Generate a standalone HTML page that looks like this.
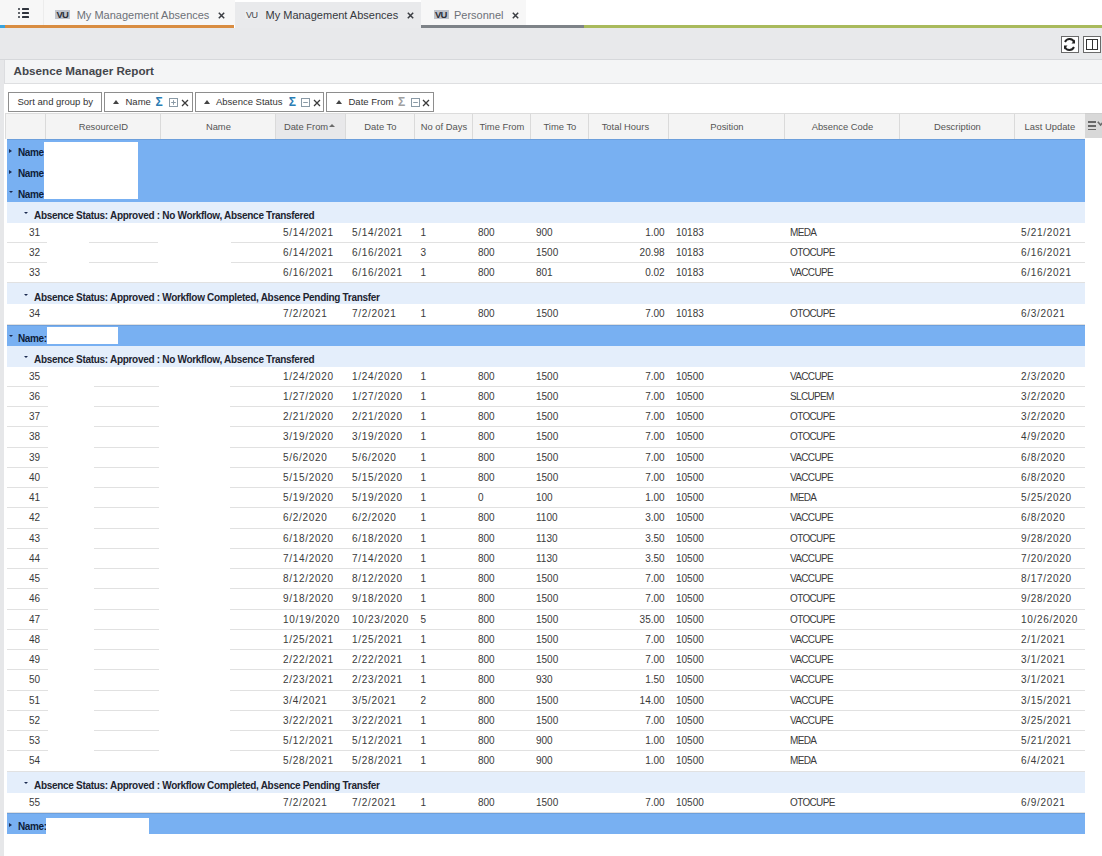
<!DOCTYPE html>
<html><head><meta charset="utf-8">
<style>
*{box-sizing:border-box;margin:0;padding:0}
html,body{width:1102px;height:856px;overflow:hidden;background:#fff}
body{position:relative;font-family:"Liberation Sans",sans-serif;color:#333}
.abs{position:absolute}
/* tabs */
#tabbar{position:absolute;left:0;top:0;width:1102px;height:28px;background:#fff}
.tab{position:absolute;top:0;height:25px;background:#f7f7f7}
.vu{position:absolute;top:9.5px;height:9.7px;font:bold 9.5px "Liberation Sans",sans-serif;line-height:10px;text-align:center;color:#2c3039;background:#bfc3cb;letter-spacing:-0.9px;text-indent:-0.5px;overflow:hidden}
.tabt{position:absolute;top:7.6px;font-size:11px;line-height:14px;color:#6d7177;white-space:nowrap}
.tabx{position:absolute;top:7px;font-size:11px;line-height:14px;color:#444;font-weight:bold}
.line{position:absolute;top:25px;height:3px}
/* toolbar */
#toolbar{position:absolute;left:0;top:28px;width:1102px;height:32px;background:#e8e9eb;border-bottom:1px solid #d6d8db}
.tbtn{position:absolute;top:8px;width:17.6px;height:17px;background:#fff;border:1px solid #6a6a6a}
#leftstrip{position:absolute;left:0;top:60px;width:4.2px;height:796px;background:#e6e7e9}
#title{position:absolute;left:4px;top:60px;width:1098px;height:24px;background:#f4f5f6;border-bottom:1px solid #dedfe1;border-left:1px solid #dcdde0}
#title b{position:absolute;left:8.6px;top:4px;font-size:11.65px;line-height:14px;color:#43464b}
/* sort bar */
.chip{position:absolute;top:92px;height:19.5px;border:1px solid #8e8e8e;background:#fff;font-size:9.5px;line-height:17.8px;color:#333;white-space:nowrap}
.chip span{position:absolute;top:0}
.up{position:absolute;top:7px;width:0;height:0;border-left:3px solid transparent;border-right:3px solid transparent;border-bottom:4px solid #444}
.sig{position:absolute;top:1px;font-size:12px;line-height:17px;font-weight:bold;color:#2a7db4}
.bx{position:absolute;top:5px;width:8px;height:8px;border:1px solid #9aa}
.cx{position:absolute;top:0;font-size:10px;font-weight:bold;color:#444}
/* header */
#hdr{position:absolute;left:5.4px;top:112.7px;width:1079.4px;height:26px;background:#f4f4f4;border-top:1px solid #dcdcdc;box-shadow:inset 1px 0 0 #dcdcdc}
.hc{position:absolute;top:0;height:26px;border-left:1px solid #dadada;font-size:9.4px;line-height:26px;color:#555;text-align:center;white-space:nowrap}
#hmenu{position:absolute;left:1084.5px;top:112.7px;width:18px;height:25.3px;background:#d8d8d8;border-top:1px solid #cfcfcf}
/* rows */
.gname{position:absolute;left:7px;width:1078px;background:#78b0f2;box-shadow:inset 0 1px 0 #6c9fdc}
.gl{position:absolute;left:0;height:21px;width:100%}
.gl b{position:absolute;left:11px;top:7px;font-size:10px;letter-spacing:-0.4px;line-height:13px;color:#0e1d3a}
.tri-r{position:absolute;left:2px;top:10px;width:0;height:0;border-top:2px solid transparent;border-bottom:2px solid transparent;border-left:3px solid #1a2a50}
.tri-d{position:absolute;left:1.5px;top:10.5px;width:0;height:0;border-left:2.5px solid transparent;border-right:2.5px solid transparent;border-top:2.5px solid #1a2a50}
.gstat{position:absolute;left:7px;width:1078px;height:21px;background:#e4eefb}
.gstat .tri-d{left:17px}
.gstat b{position:absolute;left:27px;top:7.3px;font-size:10px;line-height:13px;color:#1d2430;letter-spacing:-0.3px;white-space:nowrap}
.dr{position:absolute;left:0;width:1085px;height:20.25px}
.dr:after{content:'';position:absolute;left:7px;right:0;bottom:0;height:1px;background:#e1e1e1}
.dr.nol:after{display:none}
.dr span{position:absolute;top:4px;font-size:10px;line-height:12px;color:#3a3a3a;white-space:nowrap}
.dr .c0{left:29px}
.dr .dt{letter-spacing:0.7px}
.dr .tx{font-size:10px;letter-spacing:-0.65px}
.redact{position:absolute;background:#fff}
</style></head><body>
<div id="tabbar">
  <div class="tab" style="left:0;width:44px;border-right:1px solid #ececec"></div>
  <div class="abs" style="left:17.8px;top:7.8px;width:11.2px;height:11px">
    <div class="abs" style="left:0;top:0;width:2.6px;height:2.4px;border-radius:1.2px;background:#2f343d"></div>
    <div class="abs" style="left:4.3px;top:0;width:6.8px;height:2.4px;background:#2f343d;border-radius:0.6px"></div>
    <div class="abs" style="left:0;top:4.1px;width:2.6px;height:2.4px;border-radius:1.2px;background:#2f343d"></div>
    <div class="abs" style="left:4.3px;top:4.1px;width:6.8px;height:2.4px;background:#2f343d;border-radius:0.6px"></div>
    <div class="abs" style="left:0;top:8.3px;width:2.6px;height:2.2px;border-radius:1.2px;background:#2f343d"></div>
    <div class="abs" style="left:4.3px;top:8.3px;width:6.8px;height:2.2px;background:#2f343d;border-radius:0.6px"></div>
  </div>
  <div class="tab" style="left:44px;width:191px"></div>
  <div class="vu" style="left:55px;width:15px">VU</div>
  <div class="tabt" style="left:76.7px">My Management Absences</div>
  <svg class="abs" style="left:217.5px;top:11.5px" width="7" height="7" viewBox="0 0 7 7"><path d="M0.8 0.8 L6.2 6.2 M6.2 0.8 L0.8 6.2" stroke="#3a3d42" stroke-width="1.5"/></svg>
  <div class="tab" style="left:235px;top:1.5px;width:186px;height:26.5px;background:#e9eaec"></div>
  <div class="vu" style="left:245px;width:14px;background:#eceeef;color:#44474c;font-weight:normal;font-size:9px;letter-spacing:-0.4px">VU</div>
  <div class="tabt" style="left:265.5px;color:#35383d">My Management Absences</div>
  <svg class="abs" style="left:407px;top:11.5px" width="7" height="7" viewBox="0 0 7 7"><path d="M0.8 0.8 L6.2 6.2 M6.2 0.8 L0.8 6.2" stroke="#3a3d42" stroke-width="1.5"/></svg>
  <div class="tab" style="left:421px;width:105px"></div>
  <div class="vu" style="left:433.5px;width:15px">VU</div>
  <div class="tabt" style="left:454px">Personnel</div>
  <svg class="abs" style="left:512.3px;top:11.5px" width="7" height="7" viewBox="0 0 7 7"><path d="M0.8 0.8 L6.2 6.2 M6.2 0.8 L0.8 6.2" stroke="#3a3d42" stroke-width="1.5"/></svg>
  <div class="line" style="left:0;width:5px;background:#3aa3dc"></div>
  <div class="line" style="left:5px;width:229px;background:#d98d42"></div>
  <div class="line" style="left:421px;width:163px;background:#7e8388"></div>
  <div class="line" style="left:584px;width:518px;background:#a9ba5c"></div>
</div>
<div id="toolbar">
  <div class="tbtn" style="left:1061px">
    <svg width="15" height="15" viewBox="0 0 15 15" style="position:absolute;left:0;top:0">
      <path d="M12.2 5.2 A5 5 0 0 0 3 5" fill="none" stroke="#222" stroke-width="1.9"/>
      <path d="M2.8 9.8 A5 5 0 0 0 12 10" fill="none" stroke="#222" stroke-width="1.9"/>
      <path d="M13 2.5 L13 6.5 L9.5 6.5 Z" fill="#222"/>
      <path d="M2 12.5 L2 8.5 L5.5 8.5 Z" fill="#222"/>
    </svg>
  </div>
  <div class="tbtn" style="left:1083.3px">
    <div class="abs" style="left:2px;top:2px;width:12px;height:11px;border:1.8px solid #333"></div>
    <div class="abs" style="left:7.3px;top:2px;width:1.5px;height:11px;background:#333"></div>
  </div>
</div>
<div id="leftstrip"></div>
<div id="title"><b>Absence Manager Report</b></div>

<div class="chip" style="left:8px;width:93.5px"><span style="left:8.5px">Sort and group by</span></div>
<div class="chip" style="left:104px;width:88.5px">
  <i class="up" style="left:8px"></i><span style="left:20.5px">Name</span>
  <b class="sig" style="left:50.5px;color:#2a7db4">&#931;</b><svg class="abs" style="left:63.5px;top:5px" width="9" height="9" viewBox="0 0 9 9"><rect x="0.5" y="0.5" width="8" height="8" fill="none" stroke="#8a9aa6" stroke-width="1"/><path d="M2.2 4.5 H6.8 M4.5 2.2 V6.8" stroke="#8a9aa6" stroke-width="1"/></svg><svg class="abs" style="left:76px;top:5.5px" width="8" height="8" viewBox="0 0 8 8"><path d="M1 1 L7 7 M7 1 L1 7" stroke="#3a3a3a" stroke-width="1.3"/></svg>
</div>
<div class="chip" style="left:194.5px;width:129.5px">
  <i class="up" style="left:8px"></i><span style="left:20.5px">Absence Status</span>
  <b class="sig" style="left:93.2px;color:#2a7db4">&#931;</b><svg class="abs" style="left:105.2px;top:5px" width="9" height="9" viewBox="0 0 9 9"><rect x="0.5" y="0.5" width="8" height="8" fill="none" stroke="#8a9aa6" stroke-width="1"/><path d="M2.2 4.5 H6.8" stroke="#8a9aa6" stroke-width="1"/></svg><svg class="abs" style="left:117.5px;top:5.5px" width="8" height="8" viewBox="0 0 8 8"><path d="M1 1 L7 7 M7 1 L1 7" stroke="#3a3a3a" stroke-width="1.3"/></svg>
</div>
<div class="chip" style="left:326px;width:108px">
  <i class="up" style="left:9px"></i><span style="left:21.5px">Date From</span>
  <b class="sig" style="left:71px;color:#a0a0a0">&#931;</b><svg class="abs" style="left:83.5px;top:5px" width="9" height="9" viewBox="0 0 9 9"><rect x="0.5" y="0.5" width="8" height="8" fill="none" stroke="#8a9aa6" stroke-width="1"/><path d="M2.2 4.5 H6.8" stroke="#8a9aa6" stroke-width="1"/></svg><svg class="abs" style="left:95px;top:5.5px" width="8" height="8" viewBox="0 0 8 8"><path d="M1 1 L7 7 M7 1 L1 7" stroke="#3a3a3a" stroke-width="1.3"/></svg>
</div>

<div id="hdr">
  <div class="hc" style="left:0;width:40px;border-left:none"></div>
  <div class="hc" style="left:40px;width:115px">ResourceID</div>
  <div class="hc" style="left:155px;width:115px">Name</div>
  <div class="hc" style="left:270px;width:70px;background:#e8e8ea;text-align:left;padding-left:7.5px">Date From<i class="abs" style="left:52.3px;top:10.8px;width:0;height:0;border-left:3.2px solid transparent;border-right:3.2px solid transparent;border-bottom:3.4px solid #6a6a6a"></i></div>
  <div class="hc" style="left:340px;width:69px">Date To</div>
  <div class="hc" style="left:409px;width:58px">No of Days</div>
  <div class="hc" style="left:467px;width:58px">Time From</div>
  <div class="hc" style="left:525px;width:58px">Time To</div>
  <div class="hc" style="left:583px;width:80px;padding-right:7px">Total Hours</div>
  <div class="hc" style="left:663px;width:116px">Position</div>
  <div class="hc" style="left:779px;width:115px">Absence Code</div>
  <div class="hc" style="left:894px;width:115px">Description</div>
  <div class="hc" style="left:1009px;width:70px">Last Update</div>
</div>
<div id="hmenu">
  <div class="abs" style="left:3.5px;top:7.6px;width:8.3px;height:1.6px;background:#666"></div>
  <div class="abs" style="left:3.5px;top:11.4px;width:8.3px;height:1.6px;background:#666"></div>
  <div class="abs" style="left:3.5px;top:15.2px;width:8.3px;height:1.6px;background:#666"></div>
  <svg class="abs" style="left:12.6px;top:7.6px" width="7" height="7" viewBox="0 0 7 7"><path d="M0.8 0.8 L3.6 4 L6.4 0.8" fill="none" stroke="#6a6a6a" stroke-width="1.6"/></svg>
</div>

<div class="gname" style="top:138.60px;height:63.00px"><div class="gl" style="top:0.00px"><i class="tri-r"></i><b>Name</b></div><div class="gl" style="top:21.00px"><i class="tri-r"></i><b>Name</b></div><div class="gl" style="top:42.00px"><i class="tri-d"></i><b>Name</b></div></div>
<div class="gstat" style="top:201.60px"><i class="tri-d"></i><b>Absence Status: Approved : No Workflow, Absence Transfered</b></div>
<div class="dr" style="top:222.60px"><span class="c0">31</span><span class="dt" style="left:283px">5/14/2021</span><span class="dt" style="left:352px">5/14/2021</span><span class="nm" style="left:420.5px">1</span><span class="nm" style="left:478px">800</span><span class="nm" style="left:536px">900</span><span class="nm r" style="right:420.4px">1.00</span><span class="nm" style="left:676px">10183</span><span class="tx" style="left:790px">MEDA</span><span class="dt" style="left:1021px">5/21/2021</span></div>
<div class="redact" style="left:47px;width:42px;top:240.85px;height:3px"></div>
<div class="redact" style="left:158px;width:73px;top:240.85px;height:3px"></div>
<div class="dr" style="top:242.85px"><span class="c0">32</span><span class="dt" style="left:283px">6/14/2021</span><span class="dt" style="left:352px">6/16/2021</span><span class="nm" style="left:420.5px">3</span><span class="nm" style="left:478px">800</span><span class="nm" style="left:536px">1500</span><span class="nm r" style="right:420.4px">20.98</span><span class="nm" style="left:676px">10183</span><span class="tx" style="left:790px">OTOCUPE</span><span class="dt" style="left:1021px">6/16/2021</span></div>
<div class="redact" style="left:47px;width:42px;top:261.10px;height:3px"></div>
<div class="redact" style="left:158px;width:73px;top:261.10px;height:3px"></div>
<div class="dr" style="top:263.10px"><span class="c0">33</span><span class="dt" style="left:283px">6/16/2021</span><span class="dt" style="left:352px">6/16/2021</span><span class="nm" style="left:420.5px">1</span><span class="nm" style="left:478px">800</span><span class="nm" style="left:536px">801</span><span class="nm r" style="right:420.4px">0.02</span><span class="nm" style="left:676px">10183</span><span class="tx" style="left:790px">VACCUPE</span><span class="dt" style="left:1021px">6/16/2021</span></div>
<div class="gstat" style="top:283.35px"><i class="tri-d"></i><b>Absence Status: Approved : Workflow Completed, Absence Pending Transfer</b></div>
<div class="dr" style="top:304.35px"><span class="c0">34</span><span class="dt" style="left:283px">7/2/2021</span><span class="dt" style="left:352px">7/2/2021</span><span class="nm" style="left:420.5px">1</span><span class="nm" style="left:478px">800</span><span class="nm" style="left:536px">1500</span><span class="nm r" style="right:420.4px">7.00</span><span class="nm" style="left:676px">10183</span><span class="tx" style="left:790px">OTOCUPE</span><span class="dt" style="left:1021px">6/3/2021</span></div>
<div class="gname" style="top:324.60px;height:21.00px"><div class="gl" style="top:0.00px"><i class="tri-d"></i><b>Name:</b></div></div>
<div class="gstat" style="top:345.60px"><i class="tri-d"></i><b>Absence Status: Approved : No Workflow, Absence Transfered</b></div>
<div class="dr" style="top:366.60px"><span class="c0">35</span><span class="dt" style="left:283px">1/24/2020</span><span class="dt" style="left:352px">1/24/2020</span><span class="nm" style="left:420.5px">1</span><span class="nm" style="left:478px">800</span><span class="nm" style="left:536px">1500</span><span class="nm r" style="right:420.4px">7.00</span><span class="nm" style="left:676px">10500</span><span class="tx" style="left:790px">VACCUPE</span><span class="dt" style="left:1021px">2/3/2020</span></div>
<div class="redact" style="left:47.6px;width:46.4px;top:384.85px;height:3px"></div>
<div class="redact" style="left:159.3px;width:70.69999999999999px;top:384.85px;height:3px"></div>
<div class="dr" style="top:386.85px"><span class="c0">36</span><span class="dt" style="left:283px">1/27/2020</span><span class="dt" style="left:352px">1/27/2020</span><span class="nm" style="left:420.5px">1</span><span class="nm" style="left:478px">800</span><span class="nm" style="left:536px">1500</span><span class="nm r" style="right:420.4px">7.00</span><span class="nm" style="left:676px">10500</span><span class="tx" style="left:790px">SLCUPEM</span><span class="dt" style="left:1021px">3/2/2020</span></div>
<div class="redact" style="left:47.6px;width:46.4px;top:405.10px;height:3px"></div>
<div class="redact" style="left:159.3px;width:70.69999999999999px;top:405.10px;height:3px"></div>
<div class="dr" style="top:407.10px"><span class="c0">37</span><span class="dt" style="left:283px">2/21/2020</span><span class="dt" style="left:352px">2/21/2020</span><span class="nm" style="left:420.5px">1</span><span class="nm" style="left:478px">800</span><span class="nm" style="left:536px">1500</span><span class="nm r" style="right:420.4px">7.00</span><span class="nm" style="left:676px">10500</span><span class="tx" style="left:790px">OTOCUPE</span><span class="dt" style="left:1021px">3/2/2020</span></div>
<div class="redact" style="left:47.6px;width:46.4px;top:425.35px;height:3px"></div>
<div class="redact" style="left:159.3px;width:70.69999999999999px;top:425.35px;height:3px"></div>
<div class="dr" style="top:427.35px"><span class="c0">38</span><span class="dt" style="left:283px">3/19/2020</span><span class="dt" style="left:352px">3/19/2020</span><span class="nm" style="left:420.5px">1</span><span class="nm" style="left:478px">800</span><span class="nm" style="left:536px">1500</span><span class="nm r" style="right:420.4px">7.00</span><span class="nm" style="left:676px">10500</span><span class="tx" style="left:790px">OTOCUPE</span><span class="dt" style="left:1021px">4/9/2020</span></div>
<div class="redact" style="left:47.6px;width:46.4px;top:445.60px;height:3px"></div>
<div class="redact" style="left:159.3px;width:70.69999999999999px;top:445.60px;height:3px"></div>
<div class="dr" style="top:447.60px"><span class="c0">39</span><span class="dt" style="left:283px">5/6/2020</span><span class="dt" style="left:352px">5/6/2020</span><span class="nm" style="left:420.5px">1</span><span class="nm" style="left:478px">800</span><span class="nm" style="left:536px">1500</span><span class="nm r" style="right:420.4px">7.00</span><span class="nm" style="left:676px">10500</span><span class="tx" style="left:790px">VACCUPE</span><span class="dt" style="left:1021px">6/8/2020</span></div>
<div class="redact" style="left:47.6px;width:46.4px;top:465.85px;height:3px"></div>
<div class="redact" style="left:159.3px;width:70.69999999999999px;top:465.85px;height:3px"></div>
<div class="dr" style="top:467.85px"><span class="c0">40</span><span class="dt" style="left:283px">5/15/2020</span><span class="dt" style="left:352px">5/15/2020</span><span class="nm" style="left:420.5px">1</span><span class="nm" style="left:478px">800</span><span class="nm" style="left:536px">1500</span><span class="nm r" style="right:420.4px">7.00</span><span class="nm" style="left:676px">10500</span><span class="tx" style="left:790px">VACCUPE</span><span class="dt" style="left:1021px">6/8/2020</span></div>
<div class="redact" style="left:47.6px;width:46.4px;top:486.10px;height:3px"></div>
<div class="redact" style="left:159.3px;width:70.69999999999999px;top:486.10px;height:3px"></div>
<div class="dr" style="top:488.10px"><span class="c0">41</span><span class="dt" style="left:283px">5/19/2020</span><span class="dt" style="left:352px">5/19/2020</span><span class="nm" style="left:420.5px">1</span><span class="nm" style="left:478px">0</span><span class="nm" style="left:536px">100</span><span class="nm r" style="right:420.4px">1.00</span><span class="nm" style="left:676px">10500</span><span class="tx" style="left:790px">MEDA</span><span class="dt" style="left:1021px">5/25/2020</span></div>
<div class="redact" style="left:47.6px;width:46.4px;top:506.35px;height:3px"></div>
<div class="redact" style="left:159.3px;width:70.69999999999999px;top:506.35px;height:3px"></div>
<div class="dr" style="top:508.35px"><span class="c0">42</span><span class="dt" style="left:283px">6/2/2020</span><span class="dt" style="left:352px">6/2/2020</span><span class="nm" style="left:420.5px">1</span><span class="nm" style="left:478px">800</span><span class="nm" style="left:536px">1100</span><span class="nm r" style="right:420.4px">3.00</span><span class="nm" style="left:676px">10500</span><span class="tx" style="left:790px">VACCUPE</span><span class="dt" style="left:1021px">6/8/2020</span></div>
<div class="redact" style="left:47.6px;width:46.4px;top:526.60px;height:3px"></div>
<div class="redact" style="left:159.3px;width:70.69999999999999px;top:526.60px;height:3px"></div>
<div class="dr" style="top:528.60px"><span class="c0">43</span><span class="dt" style="left:283px">6/18/2020</span><span class="dt" style="left:352px">6/18/2020</span><span class="nm" style="left:420.5px">1</span><span class="nm" style="left:478px">800</span><span class="nm" style="left:536px">1130</span><span class="nm r" style="right:420.4px">3.50</span><span class="nm" style="left:676px">10500</span><span class="tx" style="left:790px">OTOCUPE</span><span class="dt" style="left:1021px">9/28/2020</span></div>
<div class="redact" style="left:47.6px;width:46.4px;top:546.85px;height:3px"></div>
<div class="redact" style="left:159.3px;width:70.69999999999999px;top:546.85px;height:3px"></div>
<div class="dr" style="top:548.85px"><span class="c0">44</span><span class="dt" style="left:283px">7/14/2020</span><span class="dt" style="left:352px">7/14/2020</span><span class="nm" style="left:420.5px">1</span><span class="nm" style="left:478px">800</span><span class="nm" style="left:536px">1130</span><span class="nm r" style="right:420.4px">3.50</span><span class="nm" style="left:676px">10500</span><span class="tx" style="left:790px">VACCUPE</span><span class="dt" style="left:1021px">7/20/2020</span></div>
<div class="redact" style="left:47.6px;width:46.4px;top:567.10px;height:3px"></div>
<div class="redact" style="left:159.3px;width:70.69999999999999px;top:567.10px;height:3px"></div>
<div class="dr" style="top:569.10px"><span class="c0">45</span><span class="dt" style="left:283px">8/12/2020</span><span class="dt" style="left:352px">8/12/2020</span><span class="nm" style="left:420.5px">1</span><span class="nm" style="left:478px">800</span><span class="nm" style="left:536px">1500</span><span class="nm r" style="right:420.4px">7.00</span><span class="nm" style="left:676px">10500</span><span class="tx" style="left:790px">VACCUPE</span><span class="dt" style="left:1021px">8/17/2020</span></div>
<div class="redact" style="left:47.6px;width:46.4px;top:587.35px;height:3px"></div>
<div class="redact" style="left:159.3px;width:70.69999999999999px;top:587.35px;height:3px"></div>
<div class="dr" style="top:589.35px"><span class="c0">46</span><span class="dt" style="left:283px">9/18/2020</span><span class="dt" style="left:352px">9/18/2020</span><span class="nm" style="left:420.5px">1</span><span class="nm" style="left:478px">800</span><span class="nm" style="left:536px">1500</span><span class="nm r" style="right:420.4px">7.00</span><span class="nm" style="left:676px">10500</span><span class="tx" style="left:790px">OTOCUPE</span><span class="dt" style="left:1021px">9/28/2020</span></div>
<div class="redact" style="left:47.6px;width:46.4px;top:607.60px;height:3px"></div>
<div class="redact" style="left:159.3px;width:70.69999999999999px;top:607.60px;height:3px"></div>
<div class="dr" style="top:609.60px"><span class="c0">47</span><span class="dt" style="left:283px">10/19/2020</span><span class="dt" style="left:352px">10/23/2020</span><span class="nm" style="left:420.5px">5</span><span class="nm" style="left:478px">800</span><span class="nm" style="left:536px">1500</span><span class="nm r" style="right:420.4px">35.00</span><span class="nm" style="left:676px">10500</span><span class="tx" style="left:790px">OTOCUPE</span><span class="dt" style="left:1021px">10/26/2020</span></div>
<div class="redact" style="left:47.6px;width:46.4px;top:627.85px;height:3px"></div>
<div class="redact" style="left:159.3px;width:70.69999999999999px;top:627.85px;height:3px"></div>
<div class="dr" style="top:629.85px"><span class="c0">48</span><span class="dt" style="left:283px">1/25/2021</span><span class="dt" style="left:352px">1/25/2021</span><span class="nm" style="left:420.5px">1</span><span class="nm" style="left:478px">800</span><span class="nm" style="left:536px">1500</span><span class="nm r" style="right:420.4px">7.00</span><span class="nm" style="left:676px">10500</span><span class="tx" style="left:790px">VACCUPE</span><span class="dt" style="left:1021px">2/1/2021</span></div>
<div class="redact" style="left:47.6px;width:46.4px;top:648.10px;height:3px"></div>
<div class="redact" style="left:159.3px;width:70.69999999999999px;top:648.10px;height:3px"></div>
<div class="dr" style="top:650.10px"><span class="c0">49</span><span class="dt" style="left:283px">2/22/2021</span><span class="dt" style="left:352px">2/22/2021</span><span class="nm" style="left:420.5px">1</span><span class="nm" style="left:478px">800</span><span class="nm" style="left:536px">1500</span><span class="nm r" style="right:420.4px">7.00</span><span class="nm" style="left:676px">10500</span><span class="tx" style="left:790px">VACCUPE</span><span class="dt" style="left:1021px">3/1/2021</span></div>
<div class="redact" style="left:47.6px;width:46.4px;top:668.35px;height:3px"></div>
<div class="redact" style="left:159.3px;width:70.69999999999999px;top:668.35px;height:3px"></div>
<div class="dr" style="top:670.35px"><span class="c0">50</span><span class="dt" style="left:283px">2/23/2021</span><span class="dt" style="left:352px">2/23/2021</span><span class="nm" style="left:420.5px">1</span><span class="nm" style="left:478px">800</span><span class="nm" style="left:536px">930</span><span class="nm r" style="right:420.4px">1.50</span><span class="nm" style="left:676px">10500</span><span class="tx" style="left:790px">VACCUPE</span><span class="dt" style="left:1021px">3/1/2021</span></div>
<div class="redact" style="left:47.6px;width:46.4px;top:688.60px;height:3px"></div>
<div class="redact" style="left:159.3px;width:70.69999999999999px;top:688.60px;height:3px"></div>
<div class="dr" style="top:690.60px"><span class="c0">51</span><span class="dt" style="left:283px">3/4/2021</span><span class="dt" style="left:352px">3/5/2021</span><span class="nm" style="left:420.5px">2</span><span class="nm" style="left:478px">800</span><span class="nm" style="left:536px">1500</span><span class="nm r" style="right:420.4px">14.00</span><span class="nm" style="left:676px">10500</span><span class="tx" style="left:790px">VACCUPE</span><span class="dt" style="left:1021px">3/15/2021</span></div>
<div class="redact" style="left:47.6px;width:46.4px;top:708.85px;height:3px"></div>
<div class="redact" style="left:159.3px;width:70.69999999999999px;top:708.85px;height:3px"></div>
<div class="dr" style="top:710.85px"><span class="c0">52</span><span class="dt" style="left:283px">3/22/2021</span><span class="dt" style="left:352px">3/22/2021</span><span class="nm" style="left:420.5px">1</span><span class="nm" style="left:478px">800</span><span class="nm" style="left:536px">1500</span><span class="nm r" style="right:420.4px">7.00</span><span class="nm" style="left:676px">10500</span><span class="tx" style="left:790px">VACCUPE</span><span class="dt" style="left:1021px">3/25/2021</span></div>
<div class="redact" style="left:47.6px;width:46.4px;top:729.10px;height:3px"></div>
<div class="redact" style="left:159.3px;width:70.69999999999999px;top:729.10px;height:3px"></div>
<div class="dr" style="top:731.10px"><span class="c0">53</span><span class="dt" style="left:283px">5/12/2021</span><span class="dt" style="left:352px">5/12/2021</span><span class="nm" style="left:420.5px">1</span><span class="nm" style="left:478px">800</span><span class="nm" style="left:536px">900</span><span class="nm r" style="right:420.4px">1.00</span><span class="nm" style="left:676px">10500</span><span class="tx" style="left:790px">MEDA</span><span class="dt" style="left:1021px">5/21/2021</span></div>
<div class="redact" style="left:47.6px;width:46.4px;top:749.35px;height:3px"></div>
<div class="redact" style="left:159.3px;width:70.69999999999999px;top:749.35px;height:3px"></div>
<div class="dr" style="top:751.35px"><span class="c0">54</span><span class="dt" style="left:283px">5/28/2021</span><span class="dt" style="left:352px">5/28/2021</span><span class="nm" style="left:420.5px">1</span><span class="nm" style="left:478px">800</span><span class="nm" style="left:536px">900</span><span class="nm r" style="right:420.4px">1.00</span><span class="nm" style="left:676px">10500</span><span class="tx" style="left:790px">MEDA</span><span class="dt" style="left:1021px">6/4/2021</span></div>
<div class="gstat" style="top:771.60px"><i class="tri-d"></i><b>Absence Status: Approved : Workflow Completed, Absence Pending Transfer</b></div>
<div class="dr" style="top:792.60px"><span class="c0">55</span><span class="dt" style="left:283px">7/2/2021</span><span class="dt" style="left:352px">7/2/2021</span><span class="nm" style="left:420.5px">1</span><span class="nm" style="left:478px">800</span><span class="nm" style="left:536px">1500</span><span class="nm r" style="right:420.4px">7.00</span><span class="nm" style="left:676px">10500</span><span class="tx" style="left:790px">OTOCUPE</span><span class="dt" style="left:1021px">6/9/2021</span></div>
<div class="gname" style="top:812.85px;height:21.00px"><div class="gl" style="top:0.00px"><i class="tri-r"></i><b>Name:</b></div></div>
<div class="redact" style="left:44.3px;top:141.5px;width:93.7px;height:57.5px"></div>
<div class="redact" style="left:46.5px;top:326.8px;width:71.8px;height:17.4px"></div>
<div class="redact" style="left:46px;top:817.6px;width:103.4px;height:40px"></div>
</body></html>
